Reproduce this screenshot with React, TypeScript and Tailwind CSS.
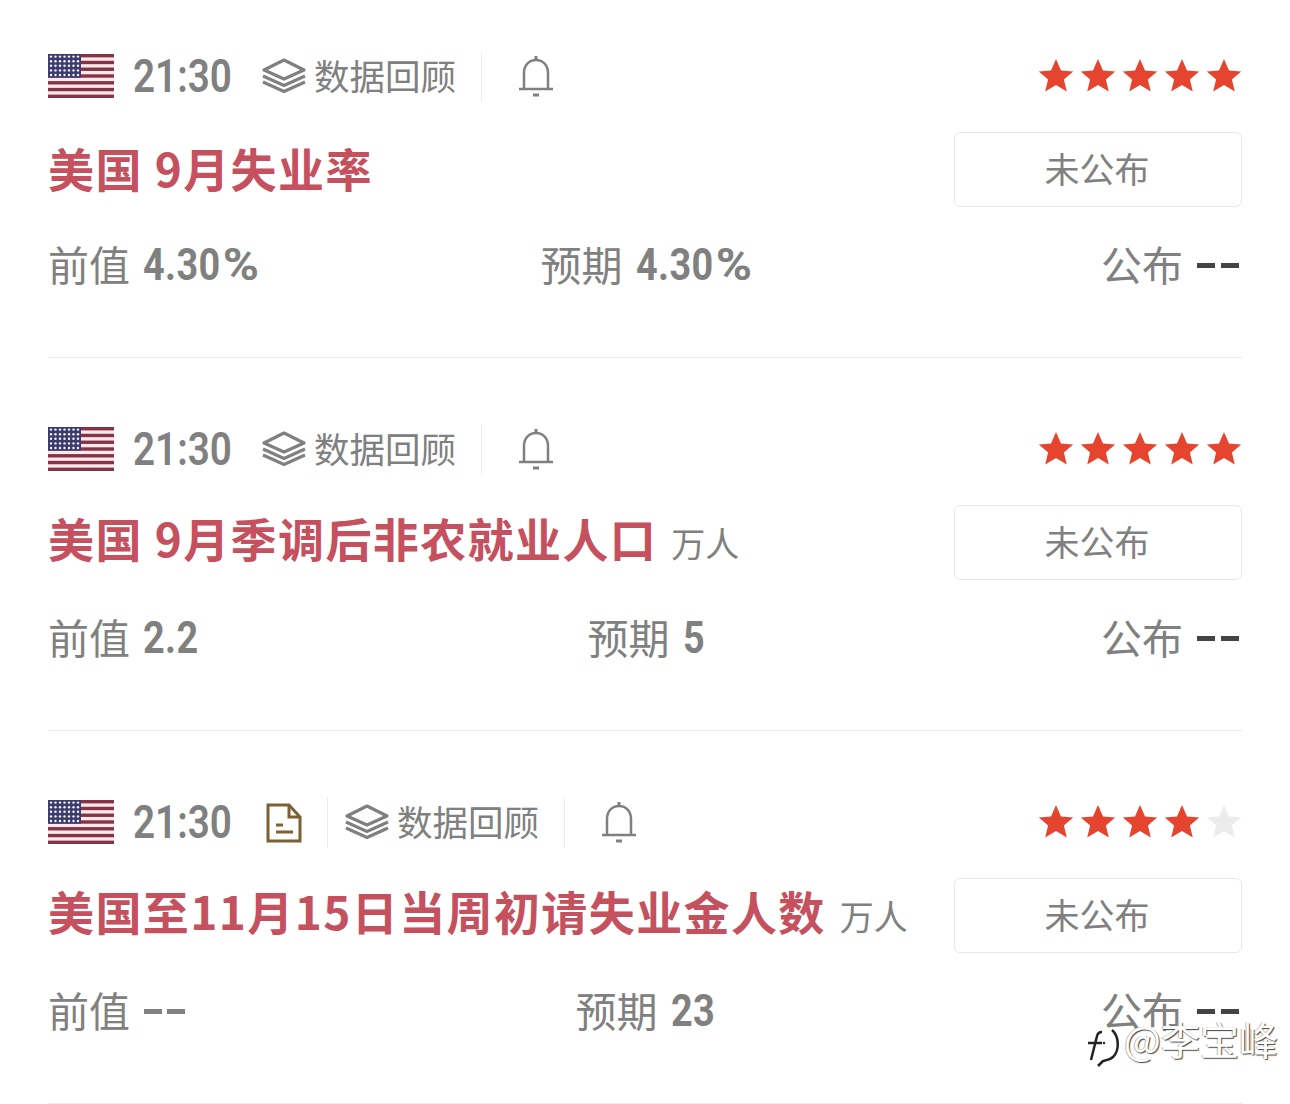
const CJK = '"Noto Sans CJK SC", "Noto Sans", sans-serif';

const events = [
  {
    id: 1,
    stars: 5,
    hasDoc: false,
    title: '美国 9月失业率',
    unit: '',
    prev: '4.30%',
    prevWidth: 'w-[114px]',
    expected: '4.30%',
    expectedWidth: 'w-[114px]',
  },
  {
    id: 2,
    stars: 5,
    hasDoc: false,
    title: '美国 9月季调后非农就业人口',
    unit: '万人',
    prev: '2.2',
    prevWidth: 'w-[52px]',
    expected: '5',
    expectedWidth: 'w-[20px]',
  },
  {
    id: 3,
    stars: 4,
    hasDoc: true,
    title: '美国至11月15日当周初请失业金人数',
    unit: '万人',
    prev: '--',
    prevWidth: 'w-[42px]',
    expected: '23',
    expectedWidth: 'w-[44px]',
  },
];

const UsFlag = () => {
  const stripes = Array.from({ length: 7 }, (_, i) => i * 2);
  const dots: [number, number][] = [];
  for (let r = 0; r < 5; r++) {
    for (let c = 0; c < 7; c++) dots.push([3 + c * 4.5, 2.6 + r * 4.6]);
  }
  return (
    <svg className="mb-[2px] shrink-0" fill="none" height="44" viewBox="0 0 66 44" width="66">
      <rect fill="#fde8ea" height="44" width="66" />
      {stripes.map((i) => (
        <rect fill="#843446" height="3.4" key={i} width="66" y={i * 3.385} />
      ))}
      <rect fill="#3c3b6e" height="23.7" width="33" />
      {dots.map(([x, y]) => (
        <circle cx={x} cy={y} fill="#f4f4fa" key={`${x}-${y}`} r="1.2" />
      ))}
    </svg>
  );
};

const LayersIcon = () => (
  <svg className="mb-[2px] shrink-0" fill="none" height="36" stroke="#808080" strokeWidth="3.2" viewBox="0 0 44 36" width="44">
    <path d="M22 2 42 12 22 21 2 12Z" strokeLinejoin="round" />
    <path d="M1 18 22 27.500 43 18" />
    <path d="M1 24 22 33.500 43 24" />
  </svg>
);

const BellIcon = () => (
  <svg className="mb-[2px] shrink-0" fill="none" height="42" stroke="#808080" strokeWidth="2.5" viewBox="0 0 36 42" width="36">
    <path d="M18 1v4" strokeWidth="3" />
    <path d="M6 33V18C6 10.5 11 5 18 5s12 5.5 12 13v15" />
    <path d="M1 34h34" />
    <path d="M15 40h6" strokeWidth="3" />
  </svg>
);

const DocIcon = () => (
  <svg className="shrink-0" fill="none" height="40" stroke="#7d6032" strokeWidth="3" viewBox="0 0 36 40" width="36">
    <path d="M2 2h21l11 12v24H2Z" />
    <path d="M23 2v12h11" />
    <path d="M10 22h7M10 29h17" />
  </svg>
);

const Star = ({ on }: { on: boolean }) => (
  <svg fill={on ? '#e5452f' : '#ececec'} height="36" viewBox="0 0 36 36" width="36">
    <path d="M18 1l5 11.4 12.2 1-9.3 8 2.900 12-10.800-6.300L7.200 33.400l2.900-12-9.300-8 12.200-1Z" />
  </svg>
);

const Stat = ({ label, value, width, align }: { label: string; value: string; width: string; align: string }) => (
  <div className={`flex items-center gap-[13px] ${align}`}>
    <span className="pb-[6px] text-[41px] leading-[50px] text-[#808080]">{label}</span>
    {value === '--' ? (
      <span className={`mb-[2px] flex justify-end gap-[5px] ${width}`}>
        <i className="h-[5px] w-[18px] bg-[#808080]" />
        <i className="h-[5px] w-[18px] bg-[#808080]" />
      </span>
    ) : (
      <span
        className={`inline-block origin-left scale-x-[0.84] pb-[3px] font-['Roboto',sans-serif] text-[45px] leading-[50px] font-bold tracking-[0.5px] whitespace-nowrap text-[#808080] ${width}`}
      >
        {value.replace('%', '')}
        {value.endsWith('%') && <span className="ml-[2px] inline-block origin-left scale-x-[1.3]">%</span>}
      </span>
    )}
  </div>
);

export default function App() {
  return (
    <main className="relative h-[1104px] overflow-hidden bg-white px-12 pt-[52px]" style={{ fontFamily: CJK }}>
      {events.map((item) => (
        <article className="mb-[67px] border-b border-[#ececec] pb-[69px] last:mb-0" key={item.id}>
          <header className="flex h-[50px] items-center">
            <UsFlag />
            <span className="ml-[19px] inline-block w-[98px] origin-left scale-x-[0.84] pb-[2px] font-['Roboto',sans-serif] text-[46px] leading-[50px] font-semibold whitespace-nowrap text-[#808080]">
              21:30
            </span>
            {item.hasDoc && (
              <>
                <span className="ml-[35px]">
                  <DocIcon />
                </span>
                <span className="ml-[25px] h-[50px] w-px bg-[#ececec]" />
              </>
            )}
            <span className={`flex items-center gap-[8px] ${item.hasDoc ? 'ml-[17px]' : 'ml-[31px]'}`}>
              <LayersIcon />
              <span className="w-[142px] pb-[4px] text-[35.5px] leading-[50px] whitespace-nowrap text-[#808080]">数据回顾</span>
            </span>
            <span className="ml-[25px] h-[50px] w-px bg-[#ececec]" />
            <span className="ml-[36px] flex">
              <BellIcon />
            </span>
            <div className="ml-auto mb-[2px] flex gap-[6px]">
              {[1, 2, 3, 4, 5].map((n) => (
                <Star key={n} on={n <= item.stars} />
              ))}
            </div>
          </header>

          <div className="mt-[30px] flex h-[75px] items-center justify-between">
            <h2 className="flex items-baseline pb-[6px] text-[46px] leading-[60px] font-semibold tracking-[1.4px] whitespace-nowrap text-[#c5505e]">
              {item.title}
              {item.unit && (
                <span className="ml-[14px] text-[34px] font-normal tracking-normal text-[#808080]">{item.unit}</span>
              )}
            </h2>
            <button
              className="h-[75px] w-[288px] rounded-md border border-[#e8e8e8] pr-[2px] pb-[3px] text-[35px] text-[#808080]"
              type="button"
            >
              未公布
            </button>
          </div>

          <div className="mt-[31px] grid h-[50px] grid-cols-3 items-center">
            <Stat align="justify-start" label="前值" value={item.prev} width={item.prevWidth} />
            <Stat align="justify-center" label="预期" value={item.expected} width={item.expectedWidth} />
            <div className="flex items-center justify-end gap-[14px] pr-[3px]">
              <span className="pb-[6px] text-[41px] leading-[50px] text-[#808080]">公布</span>
              <span className="mb-[2px] flex gap-[6px]">
                <i className="h-[5px] w-[18px] bg-[#444444]" />
                <i className="h-[5px] w-[18px] bg-[#444444]" />
              </span>
            </div>
          </div>
        </article>
      ))}

      <div className="absolute top-[1016px] left-[1086px] flex items-start gap-[2px]">
        <svg className="mt-[10px]" fill="none" height="44" viewBox="0 0 36 44" width="36">
          <path d="M16 6q-4 0-5 4L5 34" stroke="#222222" strokeWidth="2.5" />
          <path d="M2 17h14" stroke="#222222" strokeWidth="2.5" />
          <path d="M26 4c7 6 8 20 1 27-4 4-9 3-10 4l-5 5" stroke="#222222" strokeWidth="2.5" />
          <circle cx="18" cy="17" fill="#222222" r="1.2" />
        </svg>
        <span className="text-[39px] leading-[44px] whitespace-nowrap text-white [text-shadow:1px_1px_1px_#444,-1px_0_0_#bbb]">
          @李宝峰
        </span>
      </div>
    </main>
  );
}
